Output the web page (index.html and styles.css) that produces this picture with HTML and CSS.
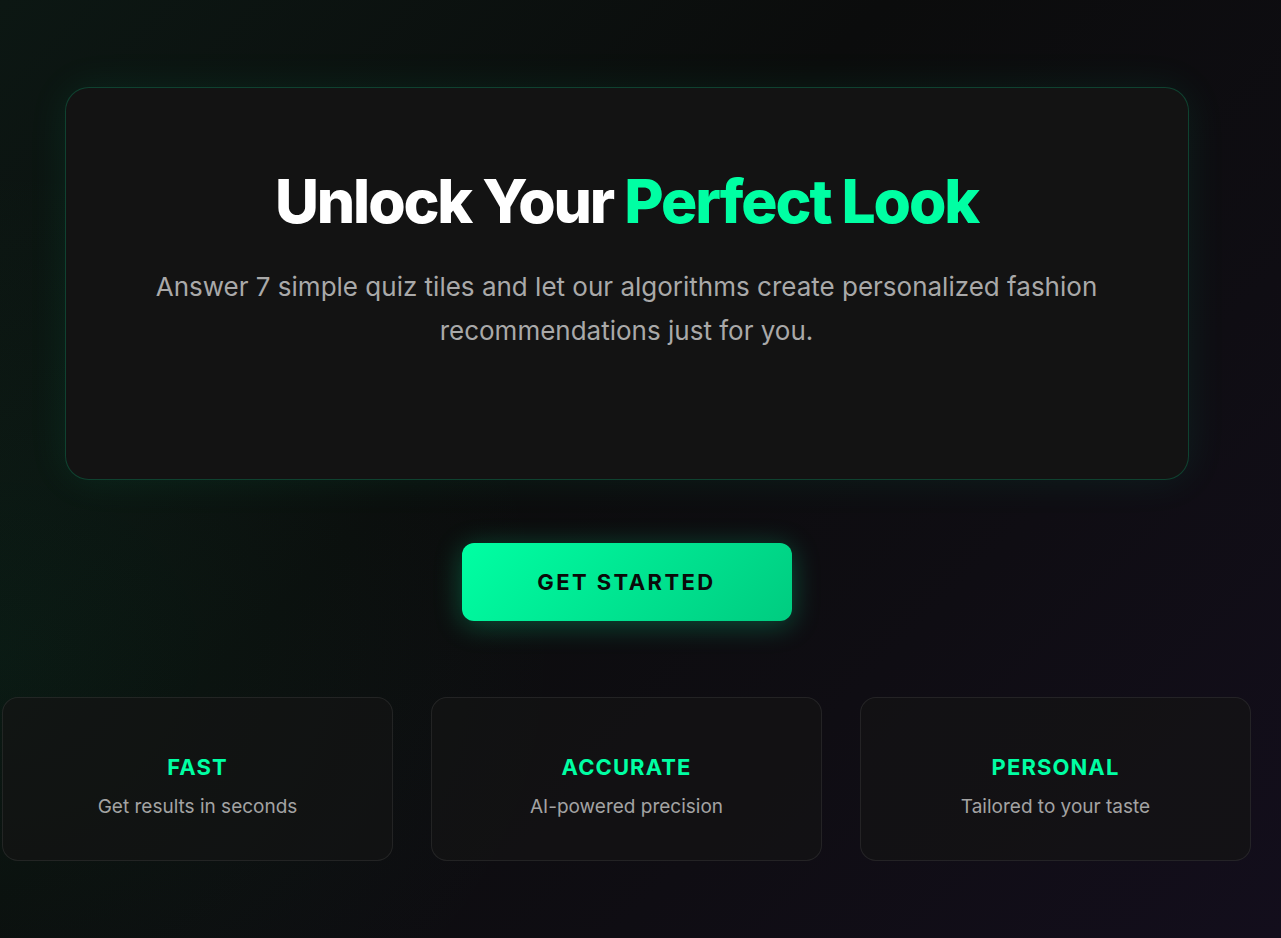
FILE: index.html
```html
<!DOCTYPE html>
<html lang="en">
<head>
<meta charset="utf-8">
<title>Unlock Your Perfect Look</title>
<link rel="stylesheet" href="styles.css">
</head>
<body>
<main class="page">
  <section class="hero">
    <h1 class="hero-title">Unlock Your <span class="accent">Perfect Look</span></h1>
    <p class="hero-sub">Answer 7 simple quiz tiles and let our algorithms create personalized fashion recommendations just for you.</p>
  </section>
  <button class="cta" type="button">GET STARTED</button>
  <section class="features">
    <div class="feature">
      <h3 class="feature-title">FAST</h3>
      <p class="feature-desc">Get results in seconds</p>
    </div>
    <div class="feature">
      <h3 class="feature-title">ACCURATE</h3>
      <p class="feature-desc">AI-powered precision</p>
    </div>
    <div class="feature">
      <h3 class="feature-title">PERSONAL</h3>
      <p class="feature-desc">Tailored to your taste</p>
    </div>
  </section>
</main>
</body>
</html>
```
FILE: styles.css
```css
* { box-sizing: border-box; }
html, body { margin: 0; padding: 0; }
body {
  min-height: 938px;
  font-family: Inter, "Noto Sans", sans-serif;
  color: #fff;
  background:
    radial-gradient(ellipse 800px 700px at 0% 70%, rgba(0, 180, 100, 0.07), transparent 70%),
    linear-gradient(135deg, #0c1713 0%, #0b0c0c 40%, #0f0d13 70%, #130e1c 100%);
  overflow: hidden;
}
.page {
  width: 1249px;
  margin-left: 2px;
  padding-top: 87px;
  display: flex;
  flex-direction: column;
  align-items: center;
}
.hero {
  width: 1124px;
  height: 393px;
  padding: 78px 60px 0;
  border-radius: 24px;
  background: #131313;
  border: 1px solid rgba(0, 255, 163, 0.2);
  box-shadow: 0 0 40px rgba(0, 255, 163, 0.08);
  text-align: center;
}
.hero-title {
  margin: 0;
  font-size: 60.5px;
  font-weight: 800;
  line-height: 70px;
  letter-spacing: -0.035em;
  color: #fff;
}
.accent { color: #00ffa3; }
.hero-sub {
  margin: 29px auto 0;
  max-width: 980px;
  font-size: 26px;
  line-height: 44px;
  color: #a9a9a9;
}
.cta {
  margin-top: 63px;
  width: 330px;
  height: 78px;
  border: none;
  border-radius: 12px;
  background: linear-gradient(135deg, #00ffa3 0%, #00cc80 100%);
  box-shadow: 0 4px 28px rgba(0, 255, 163, 0.28);
  font-family: Inter, "Noto Sans", sans-serif;
  font-size: 22px;
  font-weight: 700;
  letter-spacing: 0.11em;
  color: #0a0a0a;
  cursor: pointer;
}
.features {
  margin-top: 76px;
  width: 100%;
  display: grid;
  grid-template-columns: repeat(3, 1fr);
  gap: 38px;
}
.feature {
  height: 164px;
  padding: 56px 20px 0;
  border-radius: 16px;
  background: rgba(20, 20, 20, 0.7);
  border: 1px solid rgba(255, 255, 255, 0.08);
  text-align: center;
}
.feature-title {
  margin: 0;
  font-size: 22px;
  font-weight: 700;
  line-height: 26px;
  letter-spacing: 0.05em;
  color: #00ffa3;
}
.feature-desc {
  margin: 13px 0 0;
  font-size: 19px;
  line-height: 28px;
  color: #a3a3a3;
}
```
